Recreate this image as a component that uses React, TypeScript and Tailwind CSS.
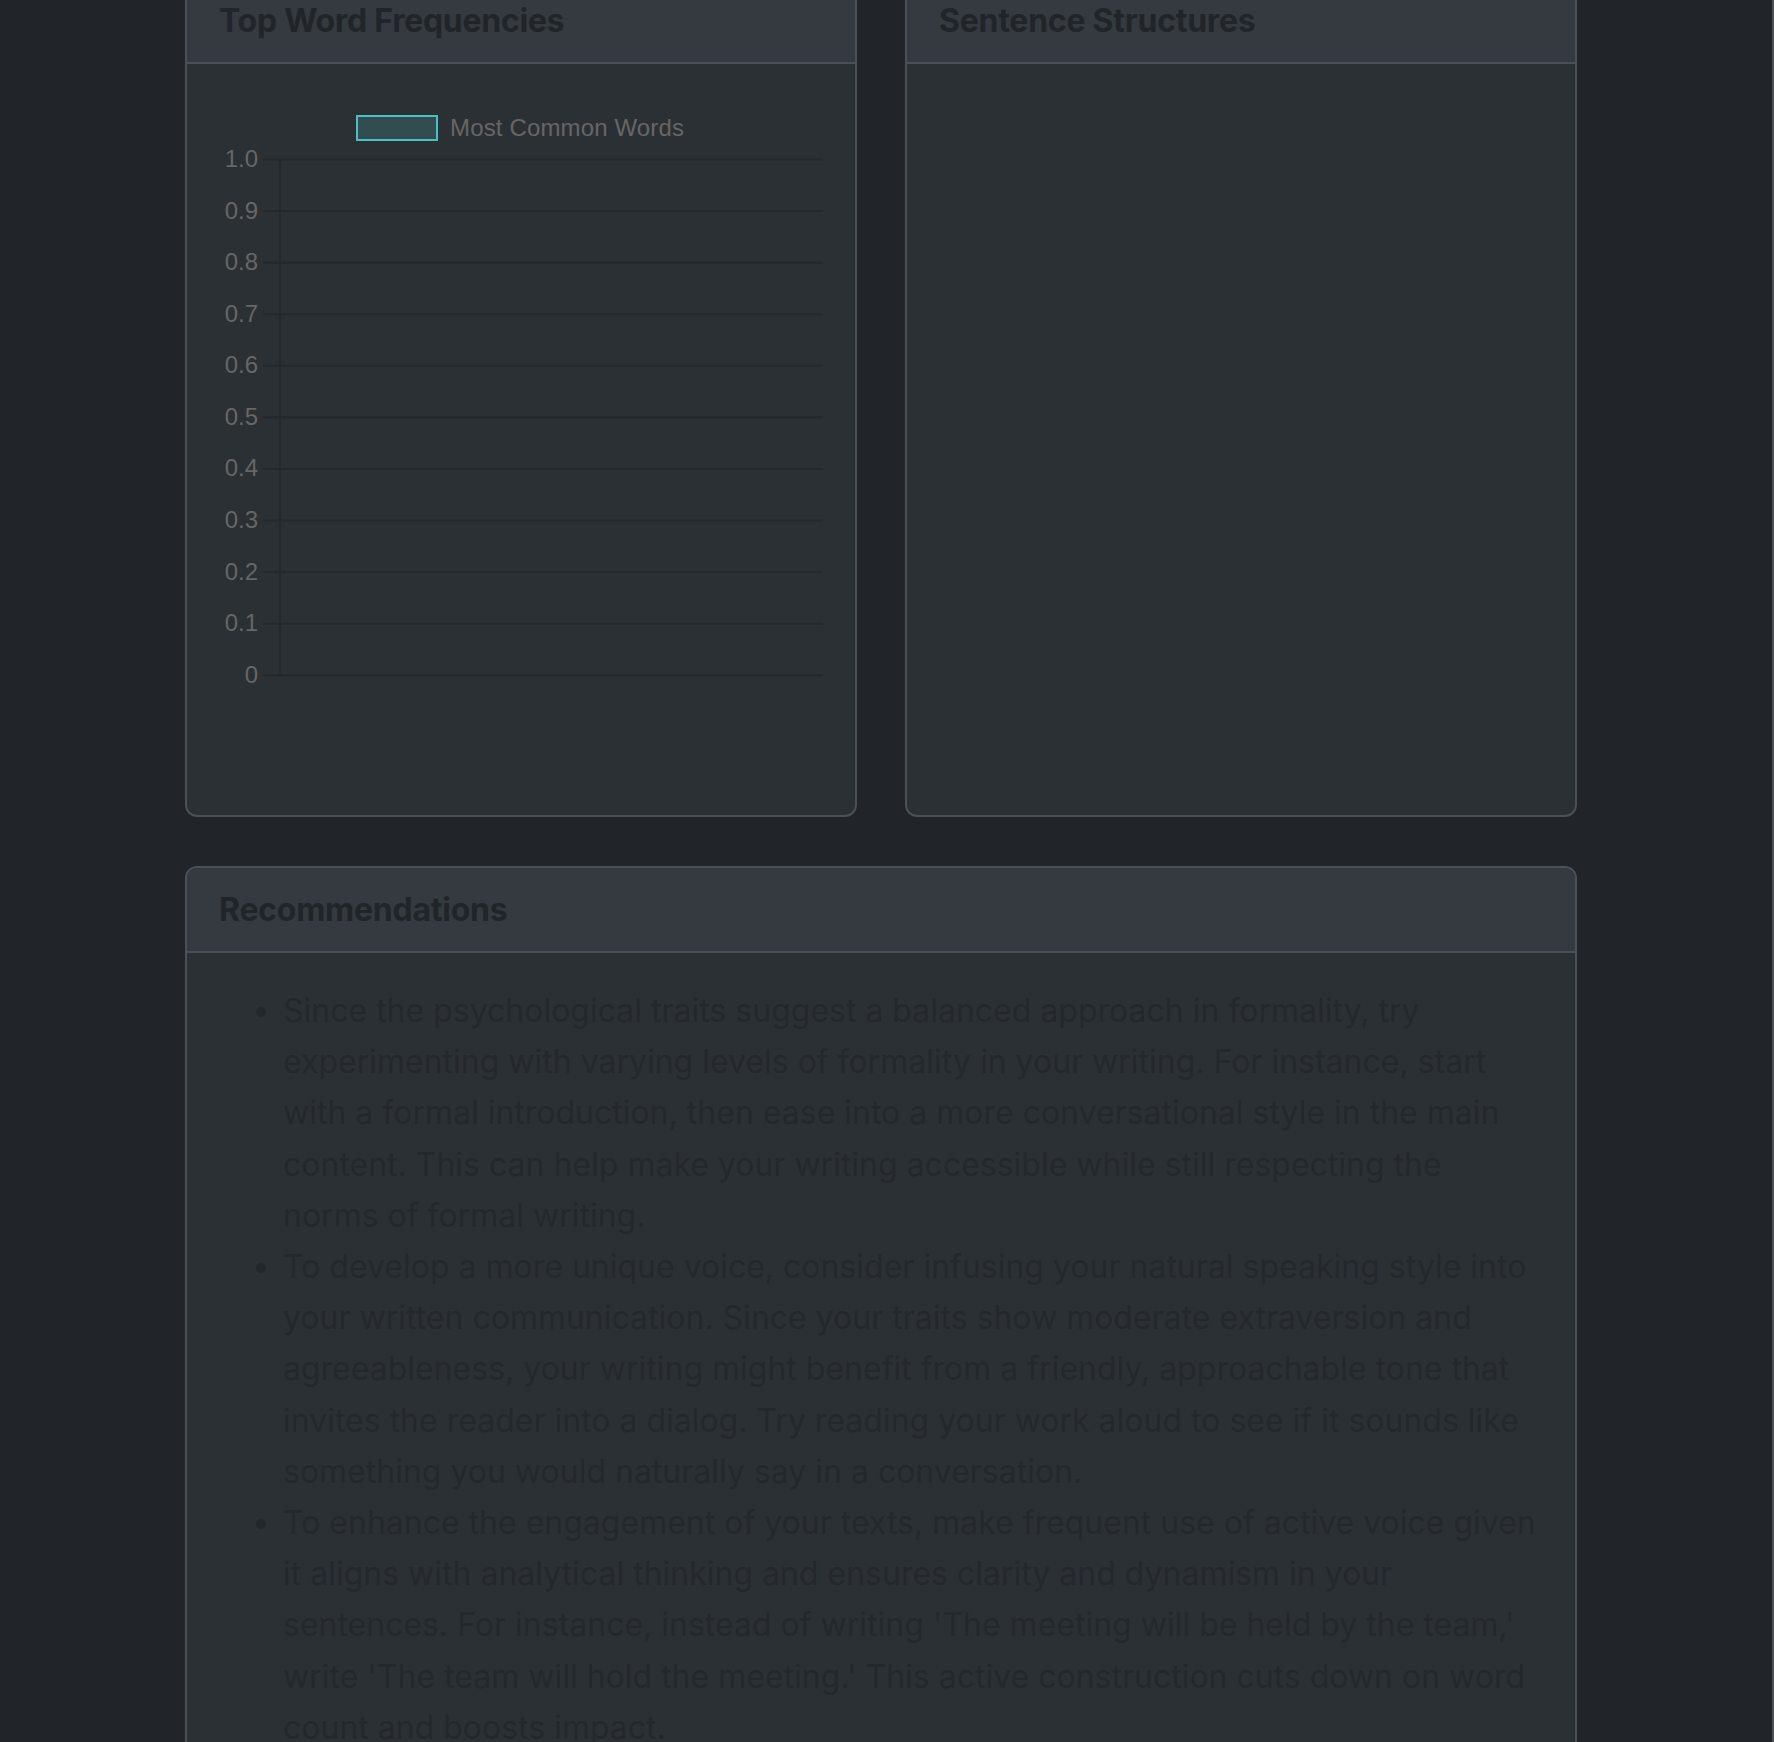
import React from "react";

const ticks = ["1.0", "0.9", "0.8", "0.7", "0.6", "0.5", "0.4", "0.3", "0.2", "0.1", "0"];

const recommendations = [
  "Since the psychological traits suggest a balanced approach in formality, try experimenting with varying levels of formality in your writing. For instance, start with a formal introduction, then ease into a more conversational style in the main content. This can help make your writing accessible while still respecting the norms of formal writing.",
  "To develop a more unique voice, consider infusing your natural speaking style into your written communication. Since your traits show moderate extraversion and agreeableness, your writing might benefit from a friendly, approachable tone that invites the reader into a dialog. Try reading your work aloud to see if it sounds like something you would naturally say in a conversation.",
  "To enhance the engagement of your texts, make frequent use of active voice given it aligns with analytical thinking and ensures clarity and dynamism in your sentences. For instance, instead of writing 'The meeting will be held by the team,' write 'The team will hold the meeting.' This active construction cuts down on word count and boosts impact.",
];

function CardHeader({ title }: { title: string }) {
  return (
    <div className="bg-[#343a3f] border-b-2 border-[#495057] px-[32px] py-[16px]">
      <h5 className="text-[32px] leading-[51px] font-bold tracking-[-0.25px] text-[#212529]">{title}</h5>
    </div>
  );
}

// empty bar chart, drawn the way chart.js leaves it when there is no data
function WordChart() {
  const top = 63.5;
  const step = 51.57;
  return (
    <svg width="604" height="687" className="block">
      <rect x="138" y="20" width="80" height="24" fill="#314d51" stroke="#4bc0c0" strokeWidth="2" />
      <text
        x="231"
        y="31"
        fontSize="24"
        fill="#666666"
        dominantBaseline="central"
        fontFamily="'Liberation Sans', Arial, sans-serif"
        letterSpacing="0.15"
      >
        Most Common Words
      </text>
      {ticks.map((t, i) => {
        const y = top + i * step;
        return (
          <g key={t}>
            <line x1="44" x2="604" y1={y} y2={y} stroke="#25282c" strokeWidth="2" />
            <text
              x="39"
              y={y - 1}
              fontSize="24"
              fill="#666666"
              textAnchor="end"
              dominantBaseline="central"
              fontFamily="'Liberation Sans', Arial, sans-serif"
            >
              {t}
            </text>
          </g>
        );
      })}
      <line x1="61" x2="61" y1={top} y2={top + 10 * step} stroke="#25282c" strokeWidth="2" />
    </svg>
  );
}

export default function App() {
  return (
    <div className="h-screen overflow-hidden bg-[#212529] border-r-2 border-[#4b5056] pr-[10px] font-['Inter',sans-serif]">
      <div className="w-[1392px] mx-auto -mt-[23px]">
        <div className="grid grid-cols-2 gap-[48px]">
          <div className="rounded-[12px] border-2 border-[#495057] bg-[#2b3035] overflow-hidden">
            <CardHeader title="Top Word Frequencies" />
            <div className="h-[751px] p-[32px]">
              <WordChart />
            </div>
          </div>
          <div className="rounded-[12px] border-2 border-[#495057] bg-[#2b3035] overflow-hidden">
            <CardHeader title="Sentence Structures" />
            <div className="h-[751px] p-[32px]"></div>
          </div>
        </div>

        <div className="mt-[49px] rounded-[12px] border-2 border-[#495057] bg-[#2b3035] overflow-hidden">
          <CardHeader title="Recommendations" />
          <div className="p-[32px]">
            <ul className="list-disc pl-[64px] text-[32px] leading-[51.2px] text-[#24282c]">
              {recommendations.map((r) => (
                <li key={r.slice(0, 20)}>{r}</li>
              ))}
            </ul>
          </div>
        </div>
      </div>
    </div>
  );
}
